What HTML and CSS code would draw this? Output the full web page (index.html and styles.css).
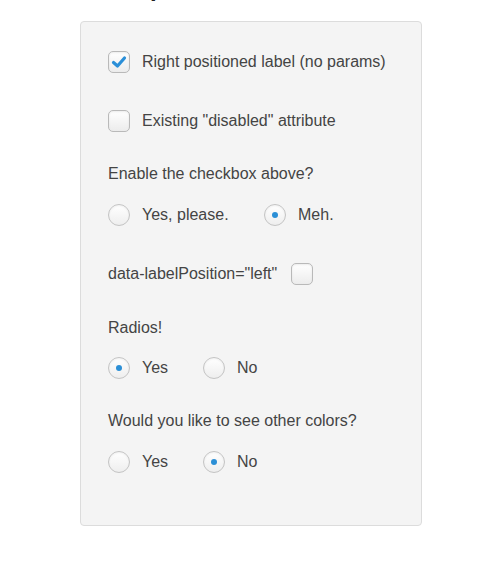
FILE: index.html
```html
<!DOCTYPE html>
<html>
<head>
<meta charset="utf-8">
<link rel="stylesheet" href="styles.css">
</head>
<body>
<h2 class="heading">Examples</h2>
<form class="card">
  <label class="row gap-37">
    <span class="box checked">
      <svg viewBox="0 0 22 22" width="22" height="22"><path d="M5.5 11.5 L9.5 15 L16.5 7" fill="none" stroke="#2a8fd8" stroke-width="3.2" stroke-linecap="round" stroke-linejoin="round"/></svg>
    </span>
    <span class="txt">Right positioned label (no params)</span>
  </label>
  <label class="row gap-31">
    <span class="box"></span>
    <span class="txt">Existing "disabled" attribute</span>
  </label>
  <div class="q gap-19">Enable the checkbox above?</div>
  <div class="row gap-37">
    <span class="radio"></span><span class="txt w-please">Yes, please.</span>
    <span class="radio on"></span><span class="txt">Meh.</span>
  </div>
  <label class="row gap-32">
    <span class="q-inline">data-labelPosition="left"</span>
    <span class="box"></span>
  </label>
  <div class="q gap-18">Radios!</div>
  <div class="row gap-31">
    <span class="radio on"></span><span class="txt w-yes">Yes</span>
    <span class="radio"></span><span class="txt">No</span>
  </div>
  <div class="q gap-19">Would you like to see other colors?</div>
  <div class="row">
    <span class="radio"></span><span class="txt w-yes">Yes</span>
    <span class="radio on"></span><span class="txt">No</span>
  </div>
</form>
</body>
</html>
```
FILE: styles.css
```css
html, body {
  margin: 0;
  padding: 0;
  background: #ffffff;
}
body {
  font-family: "Liberation Sans", Arial, sans-serif;
  color: #444444;
  width: 500px;
  height: 573px;
  overflow: hidden;
}
.heading {
  margin: -26px 0 0 86px;
  height: 28px;
  font-size: 24px;
  line-height: 28px;
  font-weight: bold;
  color: #222;
}
.card {
  margin: 19px 0 0 80px;
  width: 342px;
  height: 505px;
  box-sizing: border-box;
  background: #f4f4f4;
  border: 1px solid #dcdcdc;
  border-radius: 4px;
  padding: 29px 0 0 27px;
  display: flex;
  flex-direction: column;
}
.row {
  display: flex;
  align-items: center;
  height: 22px;
}
.gap-37 { margin-bottom: 37px; }
.gap-32 { margin-bottom: 32px; }
.gap-31 { margin-bottom: 31px; }
.gap-19 { margin-bottom: 19px; }
.gap-18 { margin-bottom: 18px; }
.q {
  height: 22px;
  line-height: 22px;
  font-size: 16px;
}
.q-inline {
  font-size: 16px;
  margin-right: 14px;
}
.txt {
  font-size: 16px;
  margin-left: 12px;
}
.w-please { width: 122px; }
.w-yes { width: 61px; }
.box {
  width: 22px;
  height: 22px;
  box-sizing: border-box;
  border: 1px solid #b9b9b9;
  border-radius: 5px;
  background: linear-gradient(#ffffff, #ececec);
  box-shadow: inset 0 1px 2px rgba(0,0,0,0.08);
  flex: none;
  display: flex;
}
.box svg {
  margin: -1px;
}
.radio {
  width: 22px;
  height: 22px;
  box-sizing: border-box;
  border: 1px solid #c4c4c4;
  border-radius: 50%;
  background: linear-gradient(#ffffff, #eeeeee);
  box-shadow: inset 0 1px 2px rgba(0,0,0,0.06);
  flex: none;
  display: flex;
  align-items: center;
  justify-content: center;
}
.radio.on::after {
  content: "";
  width: 6px;
  height: 6px;
  border-radius: 50%;
  background: #2b8fd6;
}
```
